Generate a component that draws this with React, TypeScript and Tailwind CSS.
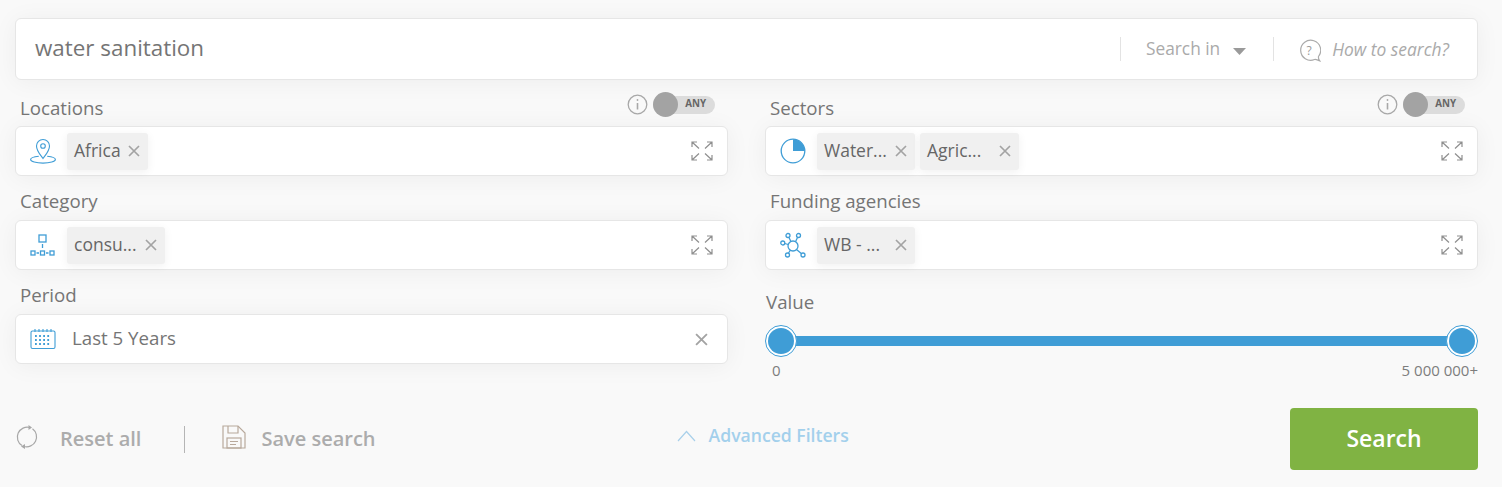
import { ReactNode } from "react";

const blue = "#3f9dd6";

function Expand() {
  return (
    <svg width="22" height="20" viewBox="0 0 22 20" fill="none" stroke="#8f8f8f" strokeWidth="1.2">
      <path d="M1 6V1h5M1 1l7 6.500M16 1h5v5M21 1l-7 6.500M1 14v5h5M1 19l7-6.500M21 14v5h-5M21 19l-7-6.500" />
    </svg>
  );
}

function Close({ size = 12 }: { size?: number }) {
  return (
    <svg width={size} height={size} viewBox="0 0 12 12" fill="none" stroke="#a3a3a3" strokeWidth="1.7">
      <path d="M1 1l10 10M11 1L1 11" />
    </svg>
  );
}

function PinIcon() {
  return (
    <svg width="26" height="26" viewBox="0 0 26 26" fill="none" stroke={blue} strokeWidth="1.1">
      <path d="M13 20.500c-2.500-3.500-6.500-7.500-6.500-12.500a6.500 6.500 0 0 1 13 0c0 5-4 9-6.500 12.500z" />
      <circle cx="13" cy="8" r="2.300" />
      <path d="M8.800 18.200C4.200 18.700 .6 19.900 .6 21.500c0 1.900 5.500 3.600 12.400 3.600s12.400-1.700 12.400-3.600c0-1.600-3.600-2.800-8.200-3.300" />
    </svg>
  );
}

function TreeIcon() {
  return (
    <svg width="26" height="24" viewBox="0 0 26 24" fill="none" stroke={blue} strokeWidth="1.3">
      <rect x="9" y="2" width="7" height="7" />
      <path d="M12.500 11v4" />
      <rect x="1" y="18" width="4" height="4" />
      <rect x="10.500" y="18" width="4" height="4" />
      <rect x="20" y="18" width="4" height="4" />
      <path d="M6.500 20h2.500M16 20h2.500" />
    </svg>
  );
}

function CalendarIcon() {
  return (
    <svg width="26" height="22" viewBox="0 0 26 22" fill="none" stroke={blue} strokeWidth="1.1">
      <rect x="1" y="3" width="24" height="17.500" rx="1.500" />
      <path d="M5 1v3M9 1v3M13 1v3M17 1v3M21 1v3" />
      <path d="M5 8h16M5 12h16M5 16h16" strokeWidth="1.800" strokeDasharray="1.800 2.300" />
    </svg>
  );
}

function PieIcon() {
  return (
    <svg width="26" height="26" viewBox="0 0 26 26" fill="none">
      <circle cx="13" cy="13" r="11.800" stroke={blue} strokeWidth="1.300" />
      <path d="M13 1.200A11.800 11.800 0 0 1 24.800 13H13z" fill={blue} />
    </svg>
  );
}

function NetworkIcon() {
  return (
    <svg width="26" height="26" viewBox="0 0 26 26" fill="none" stroke={blue} strokeWidth="1.300">
      <circle cx="13" cy="14" r="5" />
      <circle cx="8" cy="3.500" r="2" />
      <circle cx="18.500" cy="3.500" r="2" />
      <circle cx="2.800" cy="11" r="2" />
      <circle cx="7.500" cy="23" r="2" />
      <circle cx="23" cy="23" r="2" />
      <path d="M9 5.500l2 4.200M17.500 5.500l-2 4.200M4.800 11.500l3.400 1M8.500 21l2-3M16.500 17.500l4.800 4" />
    </svg>
  );
}

function Chip({ label, width }: { label: string; width: string }) {
  return (
    <div className={`flex h-[37px] items-center justify-between rounded-[3px] bg-[#f0f0f0] pl-[7px] pr-[8px] shadow-[0_2px_10px_rgba(0,0,0,0.06)] ${width}`}>
      <span className="mt-[-2px] text-[17.500px] text-[#666]">{label}</span>
      <Close />
    </div>
  );
}

function Field({ icon, children, right }: { icon: ReactNode; children: ReactNode; right: ReactNode }) {
  return (
    <div className="flex h-[50px] items-center rounded-[6px] border border-[#e6e6e6] bg-white pl-[14px] pr-[14px] shadow-[0_2px_24px_rgba(0,0,0,0.05)]">
      <div className="flex w-[26px] shrink-0 justify-center">{icon}</div>
      <div className="ml-[11px] flex flex-1 items-center gap-[5px]">{children}</div>
      {right}
    </div>
  );
}

function AnyToggle() {
  return (
    <div className="mr-[13px] flex items-center gap-[5px]">
      <svg width="21" height="21" viewBox="0 0 21 21" fill="none" stroke="#a8a8a8" strokeWidth="1.300">
        <circle cx="10.500" cy="10.500" r="9.300" />
        <path d="M10.500 9v6.500" strokeWidth="1.600" />
        <circle cx="10.500" cy="6" r="0.900" fill="#a8a8a8" stroke="none" />
      </svg>
      <div className="relative flex h-[18px] w-[62px] items-center justify-end rounded-full bg-[#dcdcdc] pr-[9px]">
        <div className="absolute left-0 top-[-4px] size-[25px] rounded-full bg-[#a3a3a3]" />
        <span className="text-[9.800px] font-bold text-[#666]">ANY</span>
      </div>
    </div>
  );
}

function Label({ text, toggle, height = "h-[44px]", top = "pt-[11px]" }: { text: string; toggle?: boolean; height?: string; top?: string }) {
  return (
    <div className={`flex items-start justify-between pl-[5px] ${height}`}>
      <span className={`text-[18.700px] leading-[28px] text-[#757575] ${top}`}>{text}</span>
      {toggle && <div className={top}><AnyToggle /></div>}
    </div>
  );
}

function Thumb() {
  return (
    <div className="z-10 flex size-[32px] shrink-0 items-center justify-center rounded-full border border-[#3f9dd6] bg-white">
      <div className="size-[26px] rounded-full bg-[#3f9dd6]" />
    </div>
  );
}

export default function App() {
  return (
    <main className="h-[487px] w-[1502px] overflow-hidden bg-[#f9f9f9] pl-[15px] pr-[24px] pt-[18px] font-['Open_Sans',sans-serif]">
      <div className="flex h-[62px] items-center rounded-[6px] border border-[#e6e6e6] bg-white pl-[19px] pr-[28px] shadow-[0_2px_24px_rgba(0,0,0,0.05)]">
        <span className="mt-[-2px] flex-1 text-[22.400px] text-[#757575]">water sanitation</span>
        <div className="h-[24px] w-px bg-[#e3e3e3]" />
        <span className="ml-[25px] mt-[-1px] text-[17.300px] text-[#aaa]">Search in</span>
        <svg className="ml-[13px] mt-[4px]" width="13" height="7" viewBox="0 0 13 7">
          <path d="M0 0h13L6.500 7z" fill="#9a9a9a" />
        </svg>
        <div className="ml-[27px] h-[24px] w-px bg-[#e3e3e3]" />
        <svg className="ml-[24px] mt-[2px]" width="23" height="23" viewBox="0 0 23 23" fill="none" stroke="#ababab" strokeWidth="1.200">
          <path d="M21.800 21.800c-1.300-1.300-1.500-2.700-1.300-4.300A10 10 0 1 0 16.500 20.500c1.700-.4 3.500.9 5.300 1.300z" />
          <text x="11" y="15.500" textAnchor="middle" fontSize="12" fill="#9a9a9a" stroke="none" fontFamily="Open Sans">?</text>
        </svg>
        <span className="ml-[11px] text-[17.400px] italic text-[#aaa]">How to search?</span>
      </div>

      <div className="grid grid-cols-[713px_713px] gap-x-[37px]">
        <div>
          <Label text="Locations" toggle height="h-[46px]" top="pt-[14px]" />
          <Field icon={<PinIcon />} right={<Expand />}>
            <Chip label="Africa" width="w-[81px]" />
          </Field>
          <Label text="Category" />
          <Field icon={<TreeIcon />} right={<Expand />}>
            <Chip label="consu..." width="w-[98px]" />
          </Field>
          <Label text="Period" />
          <Field icon={<CalendarIcon />} right={<div className="mr-[5px]"><Close size={13} /></div>}>
            <span className="ml-[5px] mt-[-2px] text-[18.700px] text-[#757575]">Last 5 Years</span>
          </Field>
        </div>
        <div>
          <Label text="Sectors" toggle height="h-[46px]" top="pt-[14px]" />
          <Field icon={<PieIcon />} right={<Expand />}>
            <Chip label="Water..." width="w-[98px]" />
            <Chip label="Agric..." width="w-[99px]" />
          </Field>
          <Label text="Funding agencies" />
          <Field icon={<NetworkIcon />} right={<Expand />}>
            <Chip label="WB - ..." width="w-[98px]" />
          </Field>
          <div className="pt-[18px]">
            <div className="pl-px text-[18.700px] leading-[28px] text-[#757575]">Value</div>
            <div className="mt-[9px] flex items-center">
              <Thumb />
              <div className="mx-[-2px] h-[10px] flex-1 bg-[#3f9dd6]" />
              <Thumb />
            </div>
            <div className="mt-[3px] flex justify-between pl-[7px] text-[15px] leading-[20px] text-[#7d7d7d]">
              <span>0</span>
              <span>5 000 000+</span>
            </div>
          </div>
        </div>
      </div>

      <div className="mt-[28px] flex items-center">
        <svg className="ml-[1px] mt-[-5px]" width="22" height="24" viewBox="0 0 22 24" fill="none" stroke="#a8a8a8" strokeWidth="1.200">
          <path d="M14 2.500A10 10 0 0 0 6 20.600M16.500 3.800A10 10 0 0 1 8 21.500" />
          <path d="M16 2.500L12.500 0v5zM5 21.500L9 19v5z" fill="#a8a8a8" stroke="none" />
        </svg>
        <span className="ml-[22px] text-[20px] font-semibold text-[#acacac]">Reset all</span>
        <div className="ml-[43px] h-[27px] w-px bg-[#b5b5b5]" />
        <svg className="ml-[37px] mb-[5px]" width="24" height="24" viewBox="0 0 24 24" fill="none" stroke="#b8a99c" strokeWidth="1.200">
          <path d="M1 1h15l7 7v15H1z" />
          <path d="M6 1v7h10V1" />
          <rect x="5" y="13" width="14" height="10" />
          <path d="M8 16.500h8M8 19.500h6" />
        </svg>
        <span className="ml-[15px] text-[20px] font-semibold text-[#acacac]">Save search</span>
        <svg className="ml-[301px] mt-[-6px]" width="19" height="12" viewBox="0 0 19 12" fill="none" stroke="#a9d0ea" strokeWidth="1.200">
          <path d="M1 11l8.500-9.500L18 11" />
        </svg>
        <span className="ml-[13px] mt-[-8px] text-[17.600px] font-semibold text-[#a3d0ec]">Advanced Filters</span>
        <button className="ml-auto h-[62px] w-[188px] rounded-[4px] bg-[#80b343] pb-[2px] text-[23px] font-semibold text-white">Search</button>
      </div>
    </main>
  );
}
